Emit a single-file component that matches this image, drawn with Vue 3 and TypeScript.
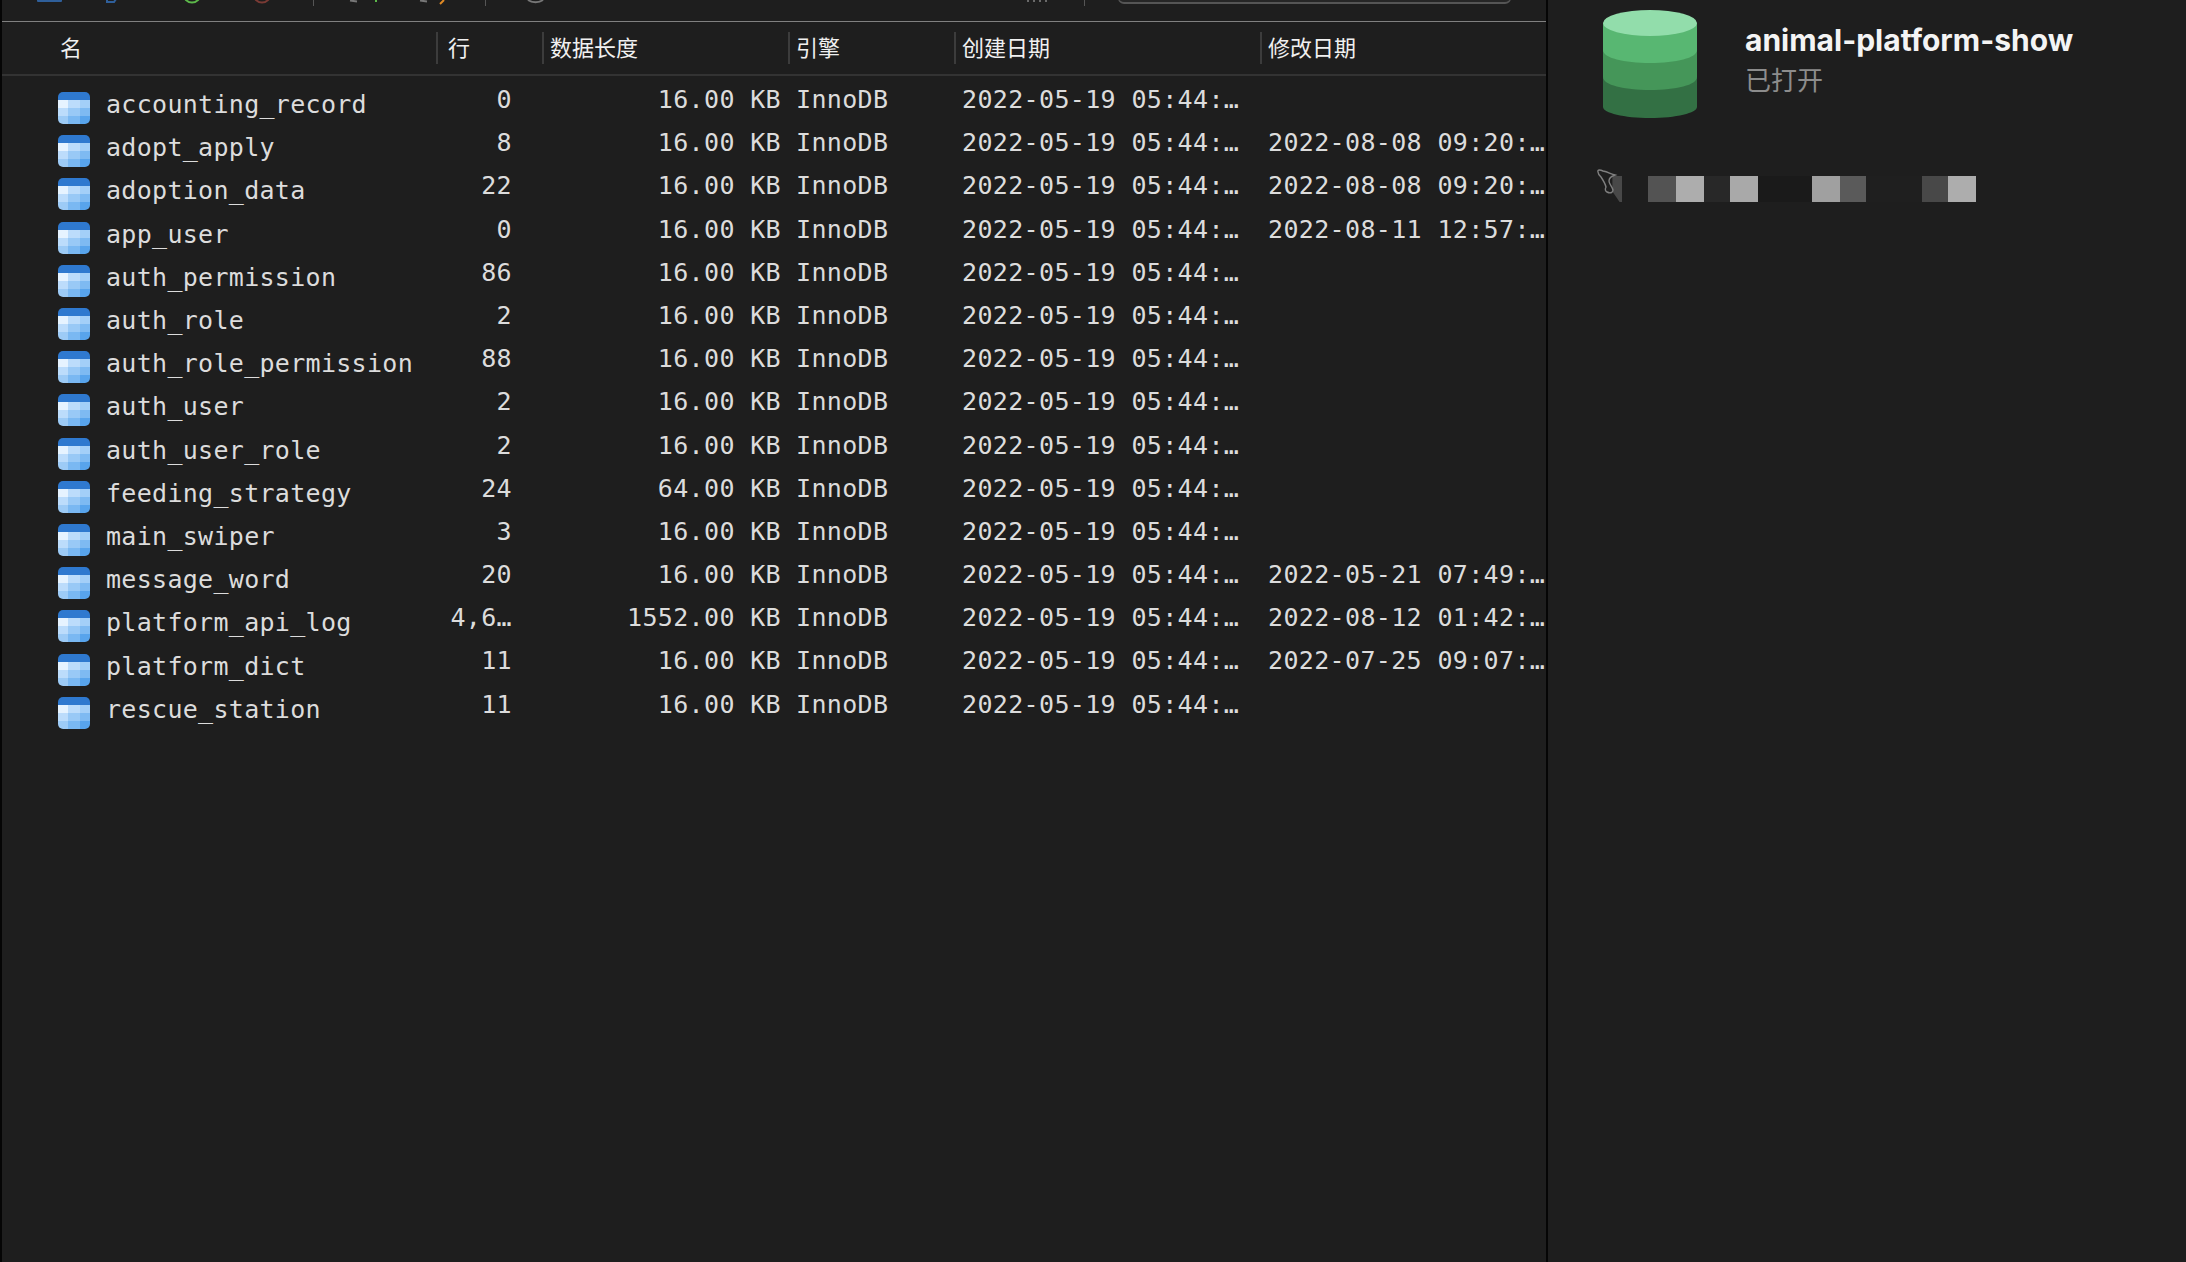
<template>
  <div class="window">
    <main class="list-pane">
      <div class="toolbar">
        <svg class="toolbar-icons" width="1546" height="22" viewBox="0 0 1546 22" fill="none">
          <rect x="37" y="-8" width="25" height="10" rx="1" fill="#2f5f9a" />
          <path d="M107 -4v6h7l2-3" stroke="#2f5f9a" stroke-width="2" />
          <circle cx="192" cy="-6" r="8.5" stroke="#5cb84a" stroke-width="2" />
          <circle cx="262" cy="-6" r="8.5" stroke="#7a3a34" stroke-width="2" />
          <path d="M350 0.5l7 1" stroke="#777" stroke-width="2" />
          <rect x="375" y="0" width="2" height="2" fill="#5cb84a" />
          <path d="M420 0.5l7 1" stroke="#777" stroke-width="2" />
          <path d="M444 0l-4 4" stroke="#e08a24" stroke-width="2" />
          <path d="M528 0c4 3 11 3 15 0" stroke="#777" stroke-width="2" />
          <path d="M1028 0v2M1034 0v2M1040 0v2M1046 0v2" stroke="#8a8a8a" stroke-width="1.4" />
        </svg>
        <span class="toolbar-sep sep-a"></span>
        <span class="toolbar-sep sep-b"></span>
        <span class="toolbar-sep sep-c"></span>
        <span class="search-box"></span>
      </div>
      <div class="table-head">
        <div v-for="col in columns" :key="col.label" class="th" :class="col.key">{{ col.label }}</div>
      </div>
      <div class="rows">
        <div v-for="row in rows" :key="row.name" class="row">
          <div class="cell name">
            <svg class="table-icon" width="32" height="32" viewBox="0 0 32 32">
              <defs>
                <clipPath id="tbl-clip"><rect width="32" height="32" rx="5" /></clipPath>
              </defs>
              <g clip-path="url(#tbl-clip)">
                <rect width="32" height="8" fill="#2f79cf" />
                <rect y="8" width="10" height="8" fill="#e6f3ff" />
                <rect x="10" y="8" width="12" height="8" fill="#bcdcfb" />
                <rect x="22" y="8" width="10" height="8" fill="#a3cff8" />
                <rect y="16" width="10" height="8" fill="#bcdcfb" />
                <rect x="10" y="16" width="12" height="8" fill="#99c9f6" />
                <rect x="22" y="16" width="10" height="8" fill="#7ebaf2" />
                <rect y="24" width="10" height="8" fill="#9dcbf6" />
                <rect x="10" y="24" width="12" height="8" fill="#7ab8f2" />
                <rect x="22" y="24" width="10" height="8" fill="#58a4ec" />
              </g>
            </svg>
            <span class="name-text">{{ row.name }}</span>
          </div>
          <div class="cell count">{{ row.count }}</div>
          <div class="cell size">{{ row.size }} KB</div>
          <div class="cell engine">InnoDB</div>
          <div class="cell created">2022-05-19 05:44:…</div>
          <div class="cell updated">{{ row.updated }}</div>
        </div>
      </div>
    </main>
    <aside class="info-pane">
      <div class="db-head">
        <svg class="db-icon" width="94" height="108" viewBox="0 0 94 108">
          <path d="M0 13v84c0 6 21 11 47 11s47-5 47-11V13z" fill="#337044" />
          <path d="M0 13v54c0 8 21 13 47 13s47-5 47-13V13z" fill="#459659" />
          <path d="M0 13v27c0 8 21 13 47 13s47-5 47-13V13z" fill="#58b772" />
          <ellipse cx="47" cy="13" rx="47" ry="13" fill="#92ddab" />
        </svg>
        <div class="db-text">
          <div class="db-name">animal-platform-show</div>
          <div class="db-status">已打开</div>
        </div>
      </div>
      <div class="conn-line">
        <div class="mosaic">
          <span v-for="(block, i) in mosaic" :key="i" :class="{ clipped: i === 0 }" :style="{ width: block.w + 'px', background: block.c }"></span>
        </div>
        <svg class="dolphin" width="26" height="27" viewBox="0 0 26 27" fill="none">
          <path d="M2 3c-1-3 3-2 5-1 5 1 8 3 12 4-3 1-6 3-6 6 0 3 3 5 4 9 0 2-2 4-6 2-2-1-2-3-1-5-1-4-3-7-5-10C3 6 2 5 2 3z" stroke="#808080" stroke-width="1.4" />
        </svg>
      </div>
    </aside>
  </div>
</template>

<script setup lang="ts">
interface Row {
  name: string
  count: string
  size: string
  updated: string
}

const columns = [
  { key: 'name', label: '名' },
  { key: 'count', label: '行' },
  { key: 'size', label: '数据长度' },
  { key: 'engine', label: '引擎' },
  { key: 'created', label: '创建日期' },
  { key: 'updated', label: '修改日期' },
]

const rows: Row[] = [
  { name: 'accounting_record', count: '0', size: '16.00', updated: '' },
  { name: 'adopt_apply', count: '8', size: '16.00', updated: '2022-08-08 09:20:…' },
  { name: 'adoption_data', count: '22', size: '16.00', updated: '2022-08-08 09:20:…' },
  { name: 'app_user', count: '0', size: '16.00', updated: '2022-08-11 12:57:…' },
  { name: 'auth_permission', count: '86', size: '16.00', updated: '' },
  { name: 'auth_role', count: '2', size: '16.00', updated: '' },
  { name: 'auth_role_permission', count: '88', size: '16.00', updated: '' },
  { name: 'auth_user', count: '2', size: '16.00', updated: '' },
  { name: 'auth_user_role', count: '2', size: '16.00', updated: '' },
  { name: 'feeding_strategy', count: '24', size: '64.00', updated: '' },
  { name: 'main_swiper', count: '3', size: '16.00', updated: '' },
  { name: 'message_word', count: '20', size: '16.00', updated: '2022-05-21 07:49:…' },
  { name: 'platform_api_log', count: '4,6…', size: '1552.00', updated: '2022-08-12 01:42:…' },
  { name: 'platform_dict', count: '11', size: '16.00', updated: '2022-07-25 09:07:…' },
  { name: 'rescue_station', count: '11', size: '16.00', updated: '' },
]

const mosaic = [
  { w: 12, c: '#484848' },
  { w: 26, c: '#1e1e1e' },
  { w: 28, c: '#535353' },
  { w: 28, c: '#adadad' },
  { w: 26, c: '#282828' },
  { w: 28, c: '#a9a9a9' },
  { w: 54, c: '#1a1a1a' },
  { w: 28, c: '#a0a0a0' },
  { w: 26, c: '#5a5a5a' },
  { w: 56, c: '#1f1f1f' },
  { w: 26, c: '#484848' },
  { w: 28, c: '#adadad' },
]
</script>

<style>
html,
body {
  margin: 0;
  background: #1e1e1e;
}
</style>

<style scoped>
.window {
  display: flex;
  width: 2186px;
  height: 1262px;
  overflow: hidden;
  background: #1e1e1e;
  font-family: "DejaVu Sans Mono", "Noto Sans CJK SC", monospace;
  color: #dcdcdc;
}

.list-pane {
  box-sizing: border-box;
  width: 1548px;
  border-left: 2px solid #050505;
  border-right: 2px solid #050505;
  flex-shrink: 0;
}

.toolbar {
  position: relative;
  height: 21px;
  border-bottom: 1px solid #808080;
  overflow: hidden;
}

.toolbar-icons {
  position: absolute;
  left: -2px;
  top: 0;
}

.toolbar-sep {
  position: absolute;
  top: 0;
  width: 1px;
  height: 6px;
  background: #555;
}

.sep-a { left: 311px; }
.sep-b { left: 483px; }
.sep-c { left: 1082px; }

.search-box {
  position: absolute;
  left: 1116px;
  top: -10px;
  width: 391px;
  height: 11px;
  border: 1px solid #555;
  border-bottom-width: 2px;
  border-radius: 6px;
  background: #262626;
}

.table-head {
  display: flex;
  align-items: center;
  height: 52px;
  border-bottom: 2px solid #333;
  font-family: "Noto Sans CJK SC", sans-serif;
  font-size: 22px;
  color: #f0f0f0;
}

.th {
  height: 32px;
  line-height: 28px;
  box-sizing: border-box;
  padding-left: 6px;
  border-left: 2px solid #3c3c3c;
}

.th.name { border-left: 0; padding-left: 58px; width: 434px; }
.th.count { padding-left: 10px; }

.name { width: 435px; }
.count { width: 106px; }
.size { width: 246px; }
.engine { width: 166px; }
.created { width: 306px; }
.updated { flex: 1; min-width: 0; }

.rows {
  padding-top: 8px;
}

.row {
  display: flex;
  height: 43.2px;
  font-size: 25px;
  letter-spacing: 0.35px;
}

.cell {
  box-sizing: border-box;
  white-space: nowrap;
  overflow: hidden;
  line-height: 32px;
}

.cell.name {
  display: flex;
  align-items: center;
  padding-left: 56px;
  gap: 16px;
  line-height: 40px;
  letter-spacing: 0.3px;
}

.table-icon {
  flex-shrink: 0;
  margin-top: 5px;
}

.name-text {
  margin-bottom: 1px;
}

.cell.count {
  text-align: right;
  padding-right: 31px;
}

.cell.size {
  text-align: right;
  padding-right: 8px;
}

.cell.engine { padding-left: 7px; }
.cell.created { padding-left: 7px; }
.cell.updated { padding-left: 7px; }

.info-pane {
  flex: 1;
  padding-left: 55px;
}

.db-head {
  display: flex;
  padding-top: 10px;
}

.db-icon {
  flex-shrink: 0;
}

.db-text {
  margin-left: 48px;
  padding-top: 11px;
}

.db-name {
  font-family: Inter, "Noto Sans", sans-serif;
  font-size: 30px;
  font-weight: 700;
  line-height: 38px;
  color: #f4f4f4;
}

.db-status {
  font-family: "Noto Sans CJK SC", sans-serif;
  font-size: 26px;
  line-height: 40px;
  color: #8c8c8c;
}

.conn-line {
  position: relative;
  margin-top: 58px;
  margin-left: 7px;
  height: 26px;
}

.dolphin {
  position: absolute;
  left: -14px;
  top: -7px;
}

.mosaic {
  display: flex;
  height: 26px;
}

.mosaic span {
  flex-shrink: 0;
}

.mosaic .clipped {
  clip-path: polygon(20% 0, 100% 0, 100% 100%, 80% 100%, 20% 60%);
}
</style>
